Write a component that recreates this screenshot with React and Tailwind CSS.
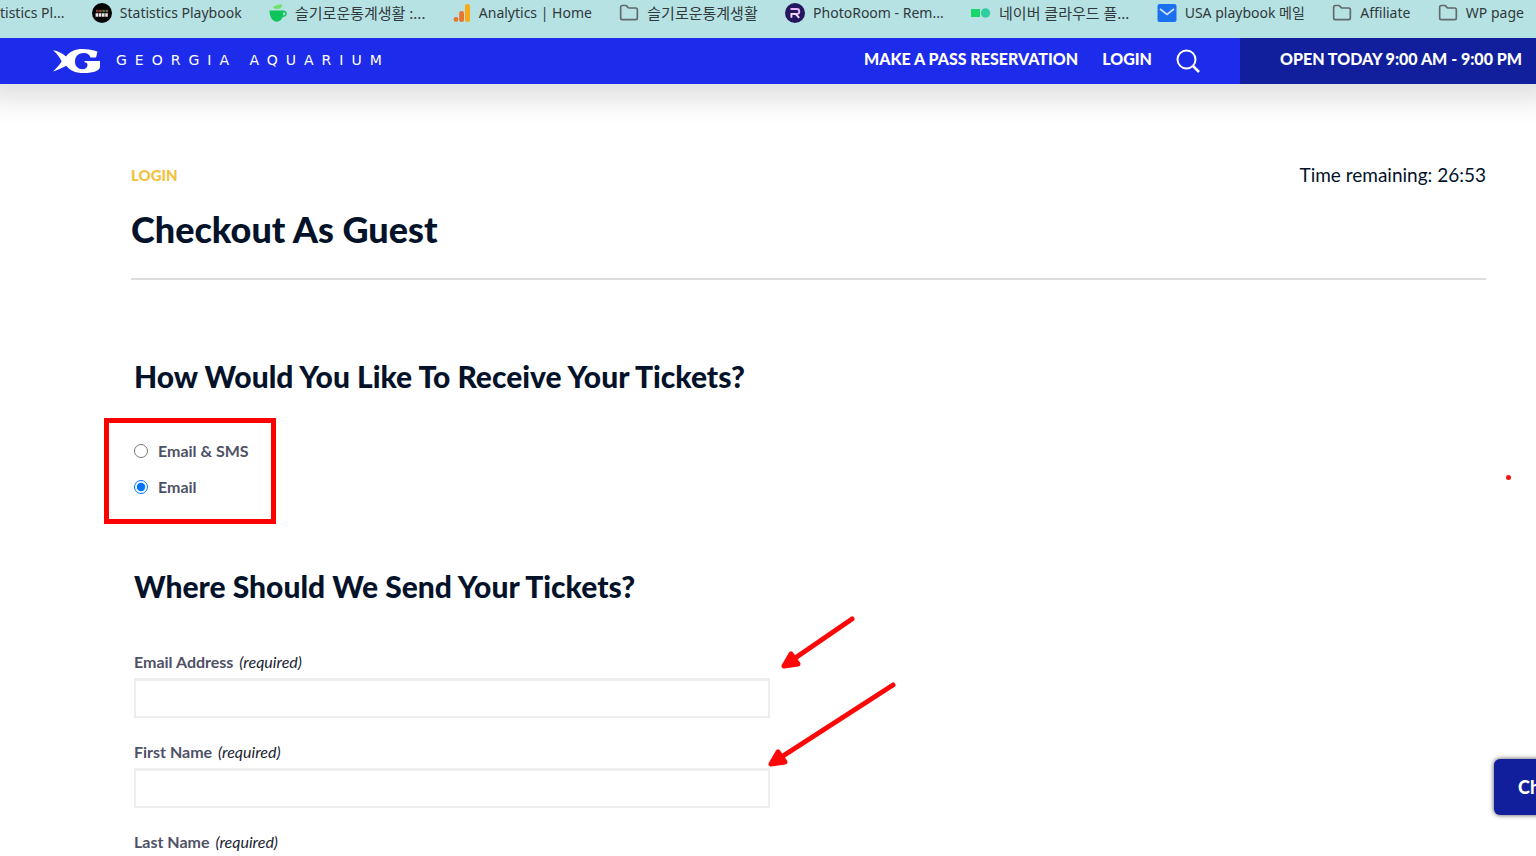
import { useState } from "react";
import { Folder } from "lucide-react";

function PlaybookIcon() {
  return (
    <svg viewBox="0 0 20 20" className="size-5">
      <circle cx="10" cy="10" r="10" fill="#050505" />
      <g strokeWidth="2.4">
        <path d="M4 8h2.5" stroke="#8a3a34" />
        <path d="M7.2 8h2.5" stroke="#9a4a2c" />
        <path d="M10.4 8h2.5" stroke="#3f7a4c" />
        <path d="M13.6 8h2.5" stroke="#7a5f3a" />
      </g>
      <path d="M3.6 12h12.8" stroke="#e9e4e2" strokeWidth="3.4" strokeDasharray="2.6 0.6" />
    </svg>
  );
}

function CupIcon() {
  return (
    <svg viewBox="0 0 18 18" className="size-[18px]">
      <path d="M4 3.5C5 1.5 8 1 13 .2c.3 2.6-1.2 4.4-4 4.6-2 .2-3.5.2-5-1.3z" fill="#6fe26a" />
      <path
        d="M.5 6.5h13.8c2 0 3.5 1 3.5 3s-1.7 3.5-4 3.5c-1.2 2.8-3.5 4.7-6 4.7C3.5 17.7.5 13 .5 6.5zm13.9 1.8c0 1.2-.1 2.2-.4 3.2 1.3-.1 2.2-.8 2.2-1.8 0-.9-.7-1.4-1.8-1.4z"
        fill="#10c45c"
      />
    </svg>
  );
}

function AnalyticsIcon() {
  return (
    <svg viewBox="0 0 18 18" className="size-[18px]">
      <rect x="12" y="0" width="5" height="18" rx="2.2" fill="#f9ab17" />
      <rect x="6.2" y="7" width="4.8" height="11" rx="2.2" fill="#e8752c" />
      <circle cx="3" cy="15.5" r="2.4" fill="#e8752c" />
    </svg>
  );
}

function PhotoRoomIcon() {
  return (
    <svg viewBox="0 0 20 20" className="size-5">
      <circle cx="10" cy="10" r="10" fill="#25175f" />
      <path d="M5.5 6h6.3a2.3 2.3 0 0 1 0 5H8" fill="none" stroke="#e9b6f5" strokeWidth="1.9" />
      <path d="M6.4 14.8v-3.9h4.2l3.6 3.9" fill="none" stroke="#f4dcff" strokeWidth="1.9" />
    </svg>
  );
}

function NaverCloudIcon() {
  return (
    <svg viewBox="0 0 20 10" className="h-[10px] w-5">
      <rect x="0" y="1" width="9" height="8" fill="#19d66b" />
      <circle cx="14.5" cy="5" r="4.7" fill="#2fcf9f" />
    </svg>
  );
}

function MailIcon() {
  return (
    <svg viewBox="0 0 20 18" className="h-[18px] w-5">
      <rect x="0.5" width="19" height="18" rx="2" fill="#1d6ff2" />
      <path d="M3 5l7 5.5L17 5" fill="none" stroke="#cfe3ff" strokeWidth="1.6" />
    </svg>
  );
}

function FolderIcon() {
  return <Folder className="size-5 text-[#62696b]" strokeWidth={2} />;
}

const bookmarks = [
  { label: "tistics Pl..." },
  { label: "Statistics Playbook", Icon: PlaybookIcon },
  { label: "슬기로운통계생활 :...", Icon: CupIcon, korean: true },
  { label: "Analytics | Home", Icon: AnalyticsIcon },
  { label: "슬기로운통계생활", Icon: FolderIcon, korean: true },
  { label: "PhotoRoom - Rem...", Icon: PhotoRoomIcon },
  { label: "네이버 클라우드 플...", Icon: NaverCloudIcon, korean: true },
  { label: "USA playbook 메일", Icon: MailIcon },
  { label: "Affiliate", Icon: FolderIcon },
  { label: "WP page", Icon: FolderIcon },
];

function BookmarksBar() {
  return (
    <nav className="relative z-10 flex h-[38px] items-start justify-between bg-[#b7e2e4] pt-[3px] pr-3 font-['Noto_Sans','Noto_Sans_CJK_KR',sans-serif] text-[#30393b]">
      {bookmarks.map(({ label, Icon, korean }, i) => (
        <a
          key={i}
          href="#"
          className={`flex h-5 items-center gap-2 whitespace-nowrap ${korean ? "text-[15px]" : "text-sm"}`}
        >
          {Icon && <Icon />}
          {label}
        </a>
      ))}
    </nav>
  );
}

function Logo() {
  return (
    <a href="#" className="flex items-center gap-4 text-white">
      <svg viewBox="0 0 47 24" className="h-6 w-[47px]" fill="currentColor">
        <path d="M0 1.2C5 2 9.5 4.3 13 7.6 16.5 2.6 22 0 29.5 0c6 0 10.5.9 15 2.6L43 8.5h-5.5C36.5 5.5 34.5 4 31 4c-5.500 0-9 3.400-9 8.500 0 4.700 3 7.700 7.500 7.700 3.200 0 5-1.500 5-4.200 0-1.600-1-2.500-3-2.700V12H47v5.500C47 21.500 41.500 24 30.500 24c-8.500 0-14-2.800-17.200-7.300C9.500 18.700 5 20.700 0 22.500c3.500-3.200 6.500-6.500 8.700-10.200C6.500 8.200 4 4.500 0 1.200z" />
      </svg>
      <span className="pb-0.5 font-['DejaVu_Sans',sans-serif] text-sm leading-5 font-normal tracking-[8px]">
        GEORGIA AQUARIUM
      </span>
    </a>
  );
}

function Header() {
  return (
    <header className="flex h-[46px] items-stretch justify-between bg-[#1d2bea] text-base font-black whitespace-nowrap text-white shadow-[0_0_24px_16px_rgba(0,0,0,0.12)]">
      <div className="flex pl-[53px]">
        <Logo />
      </div>
      <div className="flex">
        <nav className="flex items-center gap-6 pr-10">
          <a href="#" className="pb-1">MAKE A PASS RESERVATION</a>
          <a href="#" className="pb-1">LOGIN</a>
          <button type="button" aria-label="Search">
            <svg viewBox="0 0 24 24" className="size-6" fill="none" stroke="currentColor" strokeWidth="2">
              <circle cx="10.5" cy="10.5" r="9" />
              <path d="M17 17l6 6" strokeWidth="2.5" />
            </svg>
          </button>
        </nav>
        <div className="flex items-center bg-[#111f9c] pr-3.5 pb-1 pl-10">OPEN TODAY 9:00 AM - 9:00 PM</div>
      </div>
    </header>
  );
}

function DeliveryOption({ value, label, selected, onChange }) {
  return (
    <label className="flex h-5 items-center gap-2.5 text-base font-bold whitespace-nowrap text-[#4f5266]">
      <input
        type="radio"
        name="delivery"
        value={value}
        checked={selected === value}
        onChange={() => onChange(value)}
        className="size-3.5"
      />
      {label}
    </label>
  );
}

function TextField({ id, label, type = "text" }) {
  return (
    <div className="flex flex-col gap-1.5">
      <label htmlFor={id} className="text-base leading-5 font-bold text-[#4f5266]">
        {label} <em className="ml-0.5 font-normal text-[#1b2333]">(required)</em>
      </label>
      <input
        id={id}
        type={type}
        className="h-10 w-full border-2 border-t-3 border-[#eeeeee] bg-white px-3 text-base outline-none"
      />
    </div>
  );
}

function Arrow({ className, width, height }) {
  return (
    <svg
      className={className}
      width={width}
      height={height}
      fill="none"
      stroke="#fd0808"
      strokeWidth="5"
      strokeLinecap="round"
      strokeLinejoin="round"
    >
      <path d={`M${width - 3} 3L4 ${height - 5}`} />
      <path d={`M10 ${height - 16}L3 ${height - 4}l14-2z`} fill="#fd0808" />
    </svg>
  );
}

export default function App() {
  const [delivery, setDelivery] = useState("email");

  return (
    <div className="relative h-screen overflow-hidden bg-white font-['Lato',sans-serif] text-[#04132a]">
      <BookmarksBar />
      <Header />

      <main className="pt-[79px] pr-[50px] pl-[131px]">
        <div className="border-b-2 border-[#dddddd] pb-[27px]">
          <div className="flex items-center justify-between leading-6">
            <p className="text-[15px] font-black text-[#f2c13d]">LOGIN</p>
            <p className="text-[19px]">Time remaining: 26:53</p>
          </div>
          <h1 className="mt-5 text-4xl leading-11 font-black">Checkout As Guest</h1>
        </div>

        <form className="relative w-[639px] pt-[78px] pl-[3px]">
          <h2 className="text-3xl leading-9 font-black whitespace-nowrap">
            How Would You Like To Receive Your Tickets?
          </h2>
          <fieldset className="relative mt-[47px] flex w-28 flex-col gap-4">
            <DeliveryOption value="sms" label="Email & SMS" selected={delivery} onChange={setDelivery} />
            <DeliveryOption value="email" label="Email" selected={delivery} onChange={setDelivery} />
            <div className="pointer-events-none absolute -top-[23px] -right-[27px] -bottom-[27px] -left-[30px] border-5 border-[#fd0000]" />
          </fieldset>

          <h2 className="mt-[71px] text-3xl leading-9 font-black whitespace-nowrap">
            Where Should We Send Your Tickets?
          </h2>
          <div className="mt-12 flex flex-col gap-6">
            <TextField id="email" type="email" label="Email Address" />
            <TextField id="first-name" label="First Name" />
            <TextField id="last-name" label="Last Name" />
          </div>

          <Arrow className="absolute top-[336px] left-[650px]" width={74} height={54} />
          <Arrow className="absolute top-[402px] left-[637px]" width={128} height={86} />
        </form>
      </main>

      <span className="absolute top-[475px] right-[25px] size-[5px] rounded-full bg-[#f21414]" />

      <button
        type="button"
        className="absolute top-[759px] -right-10 h-14 rounded-md bg-[#111f9c] pr-5 pl-6 text-lg font-black text-white shadow-[0_0_5px_rgba(0,0,0,0.7)]"
      >
        Chat
      </button>
    </div>
  );
}
